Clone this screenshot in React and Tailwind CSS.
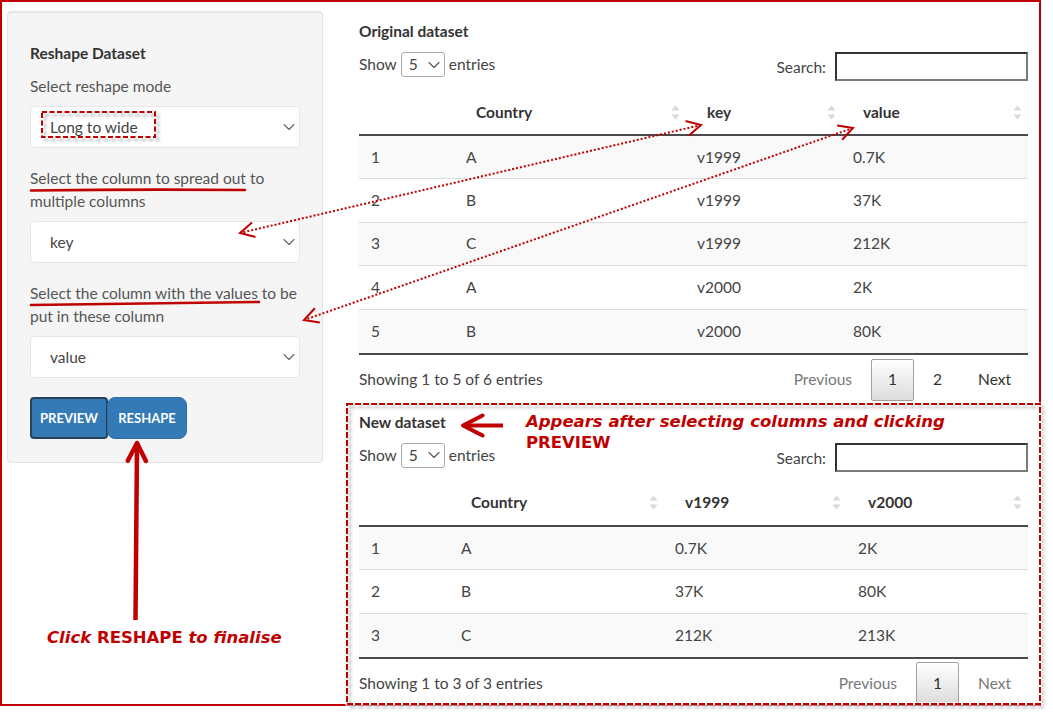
import { ChevronDown } from 'lucide-react';

const RED = '#c00000';

const original = {
  cols: 'grid-cols-[96px_231px_156px_186px]',
  head: ['', 'Country', 'key', 'value'],
  rows: [
    ['1', 'A', 'v1999', '0.7K'],
    ['2', 'B', 'v1999', '37K'],
    ['3', 'C', 'v1999', '212K'],
    ['4', 'A', 'v2000', '2K'],
    ['5', 'B', 'v2000', '80K'],
  ],
};

const reshaped = {
  cols: 'grid-cols-[91px_214px_183px_181px]',
  head: ['', 'Country', 'v1999', 'v2000'],
  rows: [
    ['1', 'A', '0.7K', '2K'],
    ['2', 'B', '37K', '80K'],
    ['3', 'C', '212K', '213K'],
  ],
};

function SortIcon() {
  return (
    <svg width="9" height="15" viewBox="0 0 9 15">
      <path d="M4.5 0.5 8.5 5.5H0.5Z" fill="#d9d9d9" />
      <path d="M0.5 9.5H8.5L4.5 14.5Z" fill="#d9d9d9" />
    </svg>
  );
}

function DataTable({ cols, head, rows }) {
  return (
    <div>
      <div className={`grid ${cols} h-[46px] border-b-2 border-[#4a4a4a]`}>
        {head.map((h, i) => (
          <div key={i} className="flex items-center justify-between pl-[21px] pr-[6px] font-bold text-[#333]">
            <span>{h}</span>
            {i > 0 && <SortIcon />}
          </div>
        ))}
      </div>
      {rows.map((r, i) => (
        <div
          key={i}
          className={`grid ${cols} h-[43.4px] ${i % 2 === 0 ? 'bg-[#f9f9f9]' : 'bg-white'} ${i < rows.length - 1 ? 'border-b border-[#dddddd]' : ''}`}
        >
          {r.map((c, j) => (
            <div key={j} className={`flex items-center ${j === 0 ? 'pl-[12px]' : 'pl-[11px]'}`}>{c}</div>
          ))}
        </div>
      ))}
      <div className="h-[2px] bg-[#4a4a4a]" />
    </div>
  );
}

function TableControls() {
  return (
    <div className="mt-[9px] flex items-start justify-between">
      <div className="flex items-center h-[25px]">
        <span>Show</span>
        <div className="mx-[4px] w-[44px] h-[25px] border border-[#aaaaaa] rounded-[3px] flex items-center justify-between pl-[7px]">
          <span>5</span>
          <ChevronDown size={20} strokeWidth={1.3} className="text-[#555]" />
        </div>
        <span>entries</span>
      </div>
      <div className="flex items-center h-[29px] gap-[9px]">
        <span className="mt-[2px]">Search:</span>
        <div className="w-[193px] h-[29px] border-2 border-t-[#333] border-l-[#333] border-r-[#7a7a7a] border-b-[#7a7a7a] bg-white" />
      </div>
    </div>
  );
}

function Pager({ items, info, className = '' }) {
  return (
    <div className={`flex items-center justify-between h-[42px] ${className}`}>
      <span>{info}</span>
      <div className="flex">
        {items.map((it) => (
          <div
            key={it.label}
            className={`ml-[2px] h-[42px] px-[16px] flex items-center border rounded-[2px] ${
              it.current
                ? 'border-[#a0a0a0] bg-linear-to-b from-white to-[#dcdcdc] text-[#333]'
                : 'border-transparent'
            } ${it.disabled ? 'text-[#777]' : 'text-[#333]'}`}
          >
            {it.label}
          </div>
        ))}
      </div>
    </div>
  );
}

function SideSelect({ value }) {
  return (
    <div className="mt-[8px] h-[42px] bg-white border border-[#e6e6e6] rounded-[4px] flex items-center justify-between pl-[19px] text-[#444]">
      <span>{value}</span>
      <ChevronDown size={20} strokeWidth={1.3} className="text-[#666]" />
    </div>
  );
}

function head(tx, ty, fx, fy, len, ang) {
  const dx = fx - tx;
  const dy = fy - ty;
  const L = Math.hypot(dx, dy);
  const ux = dx / L;
  const uy = dy / L;
  const rot = (a) => {
    const c = Math.cos((a * Math.PI) / 180);
    const s = Math.sin((a * Math.PI) / 180);
    return [tx + len * (ux * c - uy * s), ty + len * (ux * s + uy * c)];
  };
  const [ax, ay] = rot(ang);
  const [bx, by] = rot(-ang);
  return `M${ax} ${ay}L${tx} ${ty}L${bx} ${by}`;
}

function Overlay() {
  return (
    <svg className="absolute left-0 top-0 pointer-events-none" width="1053" height="719" viewBox="0 0 1053 719">
      <defs>
        <filter id="sh" x="-10%" y="-10%" width="130%" height="130%">
          <feDropShadow dx="3" dy="3" stdDeviation="1.5" floodColor="#000" floodOpacity="0.3" />
        </filter>
      </defs>

      {/* new dataset frame */}
      <rect x="347" y="404" width="693" height="300" fill="none" stroke="#fff" strokeWidth="3" />
      <rect x="347" y="404" width="693" height="300" fill="none" stroke={RED} strokeWidth="2" strokeDasharray="6 2" filter="url(#sh)" />

      {/* long to wide highlight */}
      <rect x="42" y="112" width="113" height="25" fill="none" stroke={RED} strokeWidth="2" strokeDasharray="5 2.5" filter="url(#sh)" />

      {/* underlines */}
      <path d="M31 190.5 Q 140 189 245 190" fill="none" stroke={RED} strokeWidth="2.6" strokeLinecap="round" />
      <path d="M31 305 Q 145 303.5 259 302" fill="none" stroke={RED} strokeWidth="2.6" strokeLinecap="round" />

      {/* dotted connectors */}
      <line x1="701" y1="125" x2="240" y2="233" stroke={RED} strokeWidth="2" strokeDasharray="2 2" />
      <path d={head(701, 125, 240, 233, 16, 28)} fill="none" stroke={RED} strokeWidth="2" />
      <path d={head(240, 233, 701, 125, 16, 28)} fill="none" stroke={RED} strokeWidth="2" />
      <line x1="853" y1="128" x2="304" y2="320" stroke={RED} strokeWidth="2" strokeDasharray="2 2" />
      <path d={head(853, 128, 304, 320, 16, 28)} fill="none" stroke={RED} strokeWidth="2" />
      <path d={head(304, 320, 853, 128, 16, 28)} fill="none" stroke={RED} strokeWidth="2" />

      {/* reshape arrow */}
      <line x1="135.5" y1="620" x2="137" y2="445" stroke={RED} strokeWidth="4.5" />
      <path d={head(137, 443, 135.5, 620, 20, 27)} fill="none" stroke={RED} strokeWidth="4.5" strokeLinecap="round" strokeLinejoin="round" />

      {/* new dataset arrow */}
      <line x1="503" y1="425.5" x2="465" y2="425.5" stroke={RED} strokeWidth="4" />
      <path d={head(463, 425.5, 503, 425.5, 22, 27)} fill="none" stroke={RED} strokeWidth="4" strokeLinecap="round" strokeLinejoin="round" />
    </svg>
  );
}

export default function App() {
  return (
    <div className="relative w-[1053px] h-[719px] bg-white overflow-hidden font-['Lato','Liberation_Sans',sans-serif] text-[15.5px] leading-[23px] text-[#444]">
      <div className="w-[1041px] h-[706px] border-2 border-[#c00000] flex">
        {/* Sidebar */}
        <div className="w-[321px] pl-[5px] pt-[9px] shrink-0">
          <div className="w-[316px] bg-[#f5f5f5] border border-[#e3e3e3] rounded-[4px] px-[22px] pt-[30px] pb-[23px] shadow-[inset_0_1px_1px_rgba(0,0,0,0.05)]">
            <div className="font-bold text-[#333]">Reshape Dataset</div>
            <div className="mt-[10px] text-[#555]">Select reshape mode</div>
            <SideSelect value="Long to wide" />
            <div className="mt-[19px] text-[#555]">Select the column to spread out to multiple columns</div>
            <SideSelect value="key" />
            <div className="mt-[19px] text-[#555]">Select the column with the values to be put in these column</div>
            <SideSelect value="value" />
            <div className="mt-[19px] flex">
              <button className="h-[42px] w-[78px] bg-[#337ab7] border-2 border-[#28425c] rounded-[4px] text-white font-bold text-[13px]">
                PREVIEW
              </button>
              <button className="h-[42px] w-[80px] -ml-px bg-[#337ab7] border border-[#2e6da4] rounded-[8px] text-white font-bold text-[13px]">
                RESHAPE
              </button>
            </div>
          </div>
        </div>

        {/* Main */}
        <div className="ml-[36px] w-[669px] pt-[18px]">
          <div className="font-bold text-[#333]">Original dataset</div>
          <TableControls />
          <div className="mt-[9px]">
            <DataTable {...original} />
          </div>
          <Pager
            className="mt-[4px]"
            info="Showing 1 to 5 of 6 entries"
            items={[
              { label: 'Previous', disabled: true },
              { label: '1', current: true },
              { label: '2' },
              { label: 'Next' },
            ]}
          />

          <div className="mt-[10px] font-bold text-[#333]">New dataset</div>
          <TableControls />
          <div className="mt-[9px]">
            <DataTable {...reshaped} />
          </div>
          <Pager
            className="mt-[3px]"
            info="Showing 1 to 3 of 3 entries"
            items={[
              { label: 'Previous', disabled: true },
              { label: '1', current: true },
              { label: 'Next', disabled: true },
            ]}
          />
        </div>
      </div>

      <Overlay />

      <div className="absolute left-[526px] top-[411px] font-['DejaVu_Sans',sans-serif] font-bold text-[16.5px] leading-[21px] text-[#c00000] whitespace-nowrap">
        <div className="italic">Appears after selecting columns and clicking</div>
        <div>PREVIEW</div>
      </div>
      <div className="absolute left-[47px] top-[627px] font-['DejaVu_Sans',sans-serif] font-bold text-[16.5px] leading-[21px] text-[#c00000] whitespace-nowrap">
        <span className="italic">Click</span> RESHAPE <span className="italic">to finalise</span>
      </div>
    </div>
  );
}
